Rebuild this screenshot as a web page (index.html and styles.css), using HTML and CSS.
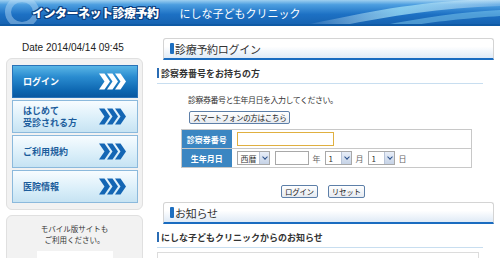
FILE: index.html
```html
<!DOCTYPE html>
<html lang="ja">
<head>
<meta charset="utf-8">
<title>インターネット診療予約</title>
<link rel="stylesheet" href="styles.css">
</head>
<body>
<header class="top">
  <svg class="top-bg" width="500" height="26" viewBox="0 0 500 26" aria-hidden="true">
    <defs>
      <linearGradient id="hb" x1="0" y1="0" x2="0" y2="1">
        <stop offset="0" stop-color="#9fd0f0"/>
        <stop offset="0.18" stop-color="#4c9ee0"/>
        <stop offset="0.55" stop-color="#1d71c4"/>
        <stop offset="1" stop-color="#1560ae"/>
      </linearGradient>
      <linearGradient id="sw" x1="0" y1="0" x2="1" y2="0">
        <stop offset="0" stop-color="#ffffff" stop-opacity="0"/>
        <stop offset="0.5" stop-color="#9ee0f6" stop-opacity="0.75"/>
        <stop offset="1" stop-color="#ffffff" stop-opacity="0.2"/>
      </linearGradient>
    </defs>
    <rect width="500" height="26" fill="url(#hb)"/>
    <path d="M300 26 C360 14 400 4 470 0 L500 0 L500 6 C440 8 390 16 340 26 Z" fill="url(#sw)"/>
    <path d="M380 26 C420 18 460 12 500 10 L500 16 C470 18 430 22 410 26 Z" fill="#8fd6f4" fill-opacity="0.45"/>
    <ellipse cx="22" cy="12" rx="14" ry="13" fill="none" stroke="#b8dcf6" stroke-opacity="0.45" stroke-width="6"/>
    <rect y="24" width="500" height="2" fill="#0f5aa5"/>
  </svg>
  <h1 class="site-title">インターネット診療予約</h1>
  <p class="clinic">にしな子どもクリニック</p>
</header>

<div class="wrap">
  <aside class="side">
    <p class="date">Date 2014/04/14 09:45</p>
    <nav class="menu">
      <a class="menu-item active" href="#"><span>ログイン</span>
        <svg class="chev" width="27" height="17" viewBox="0 0 27 16"><polygon points="0,0 5.5,0 11,8 5.5,16 0,16 5.5,8"/><polygon points="8,0 13.5,0 19,8 13.5,16 8,16 13.5,8"/><polygon points="16,0 21.5,0 27,8 21.5,16 16,16 21.5,8"/></svg></a>
      <a class="menu-item" href="#"><span>はじめて<br>受診される方</span>
        <svg class="chev" width="27" height="17" viewBox="0 0 27 16"><polygon points="0,0 5.5,0 11,8 5.5,16 0,16 5.5,8"/><polygon points="8,0 13.5,0 19,8 13.5,16 8,16 13.5,8"/><polygon points="16,0 21.5,0 27,8 21.5,16 16,16 21.5,8"/></svg></a>
      <a class="menu-item" href="#"><span>ご利用規約</span>
        <svg class="chev" width="27" height="17" viewBox="0 0 27 16"><polygon points="0,0 5.5,0 11,8 5.5,16 0,16 5.5,8"/><polygon points="8,0 13.5,0 19,8 13.5,16 8,16 13.5,8"/><polygon points="16,0 21.5,0 27,8 21.5,16 16,16 21.5,8"/></svg></a>
      <a class="menu-item" href="#"><span>医院情報</span>
        <svg class="chev" width="27" height="17" viewBox="0 0 27 16"><polygon points="0,0 5.5,0 11,8 5.5,16 0,16 5.5,8"/><polygon points="8,0 13.5,0 19,8 13.5,16 8,16 13.5,8"/><polygon points="16,0 21.5,0 27,8 21.5,16 16,16 21.5,8"/></svg></a>
    </nav>
    <div class="mobile">
      <p>モバイル版サイトも<br>ご利用ください。</p>
      <div class="qr"></div>
    </div>
  </aside>

  <main class="main">
    <h2 class="box-title"><span class="mark"></span>診療予約ログイン</h2>
    <h3 class="sub-title">診察券番号をお持ちの方</h3>
    <p class="lead">診察券番号と生年月日を入力してください。</p>
    <div class="sp-row"><button class="btn">スマートフォンの方はこちら</button></div>
    <table class="form">
      <tr>
        <th>診察券番号</th>
        <td><input class="txt card" type="text"></td>
      </tr>
      <tr>
        <th>生年月日</th>
        <td>
          <div class="birth">
            <span class="sel w-era"><span class="val">西暦</span><span class="arr"></span></span>
            <input class="txt year" type="text">
            <span class="unit">年</span>
            <span class="sel w-num"><span class="val">1</span><span class="arr"></span></span>
            <span class="unit">月</span>
            <span class="sel w-num"><span class="val">1</span><span class="arr"></span></span>
            <span class="unit">日</span>
          </div>
        </td>
      </tr>
    </table>
    <div class="actions">
      <button class="btn">ログイン</button>
      <button class="btn">リセット</button>
    </div>
    <h2 class="box-title"><span class="mark"></span>お知らせ</h2>
    <h3 class="sub-title">にしな子どもクリニックからのお知らせ</h3>
    <div class="news"></div>
  </main>
</div>
</body>
</html>
```

FILE: styles.css
```css
* { box-sizing: border-box; }
html, body { margin: 0; padding: 0; }
body {
  width: 500px;
  height: 258px;
  overflow: hidden;
  background: #fff;
  font-family: "Noto Sans CJK JP", "Liberation Sans", sans-serif;
  color: #333;
}

.top {
  position: relative;
  height: 26px;
  display: flex;
  align-items: center;
  overflow: hidden;
}
.top-bg { position: absolute; left: 0; top: 0; }
.site-title {
  position: relative;
  margin: 0 0 0 32px;
  font-size: 12px;
  font-weight: 900;
  letter-spacing: -0.5px;
  color: #fff;
  line-height: 14px;
  text-shadow: 1px 0 0 #0b3f80, -1px 0 0 #0b3f80, 0 1px 0 #0b3f80, 0 -1px 0 #0b3f80, 1px 1px 0 #0b3f80, -1px -1px 0 #0b3f80, 1px -1px 0 #0b3f80, -1px 1px 0 #0b3f80;
}
.clinic {
  position: relative;
  margin: 0 0 0 21px;
  font-size: 11px;
  color: #fff;
  line-height: 14px;
}

.wrap {
  display: flex;
  padding-left: 6px;
}

.side { width: 137px; flex: none; }
.date {
  margin: 16px 0 4px 16px;
  font-family: "Liberation Sans", Arial, sans-serif;
  font-size: 10px;
  line-height: 12px;
  color: #222;
}
.menu {
  display: flex;
  flex-direction: column;
  gap: 2px;
  padding: 6px 4px 6px 5px;
  background: #f2f2f2;
  border: 1px solid #e0e0e0;
  border-radius: 6px;
}
.menu-item {
  display: flex;
  align-items: center;
  justify-content: space-between;
  height: 33px;
  padding: 0 11px 0 10px;
  text-decoration: none;
  font-size: 9px;
  font-weight: bold;
  line-height: 12px;
  color: #1c5d9c;
  background: linear-gradient(#f7fcff, #d9eef9 60%, #c6e3f3);
  border: 1px solid #8bb9dc;
}
.menu-item .chev { fill: #1466b4; }
.menu-item.active {
  color: #fff;
  background: linear-gradient(#5ab6e6, #2a8cd0 35%, #0d66b0 80%, #0a58a0);
  border-color: #2a73b8;
}
.menu-item.active .chev { fill: #fff; }

.mobile {
  margin-top: 5px;
  height: 60px;
  padding-top: 7px;
  background: #f2f2f2;
  border: 1px solid #e0e0e0;
  border-radius: 6px;
  text-align: center;
}
.mobile p {
  margin: 0;
  font-size: 7.5px;
  line-height: 11px;
  color: #333;
}
.qr {
  width: 76px;
  height: 20px;
  margin: 6px auto 0;
  background: #fff;
}

.main {
  width: 337px;
  margin-left: 14px;
  padding-top: 12px;
}
.box-title {
  display: flex;
  align-items: center;
  height: 22px;
  margin: 0 0 0 6px;
  padding-left: 6px;
  font-size: 11px;
  font-weight: normal;
  letter-spacing: -0.3px;
  color: #333;
  background: linear-gradient(#ffffff, #ffffff 40%, #dfeaf6);
  border: 1px solid #d4d4d4;
  border-bottom: 2px solid #1a6cc0;
  border-radius: 3px 3px 0 0;
}
.box-title .mark {
  width: 4px;
  height: 11px;
  margin-right: 1px;
  background: #1e6fc0;
  border-radius: 1px;
}
.sub-title {
  width: 326px;
  margin: 5px 0 0 0;
  padding: 3px 0 4px 0;
  font-size: 9px;
  font-weight: bold;
  line-height: 11px;
  color: #333;
  border-bottom: 1px solid #c8def0;
}
.sub-title::before {
  content: "";
  display: inline-block;
  width: 2px;
  height: 10px;
  margin-right: 2px;
  vertical-align: -1px;
  background: #2a6cb4;
}
.lead {
  margin: 11px 0 0 31px;
  font-size: 8px;
  letter-spacing: -0.5px;
  line-height: 10px;
  color: #333;
}
.sp-row { display: flex; margin: 6px 0 0 32px; }
.btn {
  height: 13px;
  padding: 0 3px;
  font-family: "Noto Sans CJK JP", sans-serif;
  font-size: 7.5px;
  line-height: 11px;
  letter-spacing: -0.3px;
  color: #222;
  background: linear-gradient(#ffffff, #e6eaf0);
  border: 1px solid #5d7fa8;
  border-radius: 2px;
}

.form {
  width: 291px;
  margin: 5px 0 0 24px;
  border-collapse: collapse;
  border: 1px solid #c8c8c8;
}
.form th {
  width: 50px;
  height: 19px;
  padding: 0;
  font-size: 8px;
  font-weight: bold;
  color: #fff;
  background: #3b86c2;
  border-bottom: 1px solid #c8c8c8;
  text-align: center;
}
.form td {
  padding: 0 0 0 5px;
  border-bottom: 1px solid #c8c8c8;
}
.txt {
  display: block;
  height: 14px;
  padding: 0;
  border: 1px solid #a8a8a8;
  background: #fff;
}
.txt.card { width: 97px; border-color: #e0b040; }
.birth { display: flex; align-items: center; }
.txt.year { width: 34px; margin-left: 5px; }
.sel {
  display: flex;
  align-items: center;
  justify-content: space-between;
  height: 14px;
  padding-left: 3px;
  border: 1px solid #a8a8a8;
  background: #fff;
  font-size: 8px;
  color: #333;
}
.sel.w-era { width: 33px; }
.sel.w-num { width: 27px; }
.sel .arr {
  width: 10px;
  height: 12px;
  background: linear-gradient(#e8eef8, #c6d3e6);
  border-left: 1px solid #b8c4d8;
  position: relative;
}
.sel .arr::after {
  content: "";
  position: absolute;
  left: 3px;
  top: 3px;
  width: 3px;
  height: 3px;
  border-right: 1.5px solid #2a4f8a;
  border-bottom: 1.5px solid #2a4f8a;
  transform: rotate(45deg);
}
.unit {
  margin: 0 4px;
  font-size: 8px;
  color: #666;
}

.actions {
  display: flex;
  gap: 10px;
  margin: 17px 0 4px 124px;
}
.news {
  width: 322px;
  height: 20px;
  margin-top: 4px;
  border: 1px solid #dcdcdc;
}
```
